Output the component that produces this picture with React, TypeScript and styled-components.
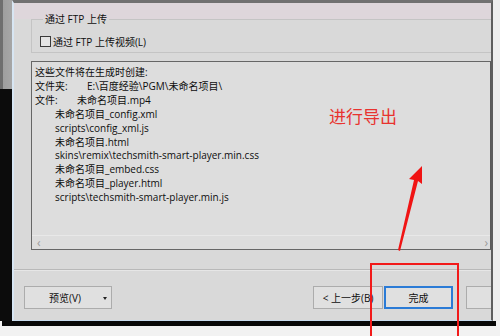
import styled, { createGlobalStyle } from 'styled-components';

const GlobalStyle = createGlobalStyle`
  html, body {
    margin: 0;
    padding: 0;
    background: #ececec;
  }
  body {
    font-family: "Open Sans", "Noto Sans CJK SC", sans-serif;
    font-size: 10px;
    color: #0e0e0e;
  }
`;

const files = [
	'未命名项目_config.xml',
	'scripts\\config_xml.js',
	'未命名项目.html',
	'skins\\remix\\techsmith-smart-player.min.css',
	'未命名项目_embed.css',
	'未命名项目_player.html',
	'scripts\\techsmith-smart-player.min.js',
];

export default function App() {
	return (
		<>
			<GlobalStyle />
			<Screen>
				<Main>
					<LeftStrip />
					<Window>
						<GroupBox>
							<Legend>通过 FTP 上传</Legend>
							<CheckRow>
								<Check />
								<span>通过 FTP 上传视频(L)</span>
							</CheckRow>
						</GroupBox>

						<FileList>
							<Lines>
								<Line>这些文件将在生成时创建:</Line>
								<Line>
									<Label $w={52}>文件夹:</Label>E:\百度经验\PGM\未命名项目\
								</Line>
								<Line>
									<Label $w={42}>文件:</Label>未命名项目.mp4
								</Line>
								{files.map((f) => (
									<Line key={f} $indent>
										{f}
									</Line>
								))}
							</Lines>
							<ScrollBar>
								<span>‹</span>
								<span>›</span>
							</ScrollBar>
						</FileList>

						<Separator />

						<ButtonRow>
							<Button $w={88}>
								预览(V)
								<Caret />
							</Button>
							<Spacer />
							<Button $w={70}>&lt; 上一步(B)</Button>
							<Button $w={69} $primary>
								完成
							</Button>
							<Button $w={70} />
						</ButtonRow>
					</Window>
					<RightMargin />
				</Main>
				<BottomBar />

				<Note>进行导出</Note>
				<Arrow viewBox="0 0 40 90" width="40" height="90">
					<path d="M6 84 L22 14 L17 13 L30 0 L30 18 L26 15 L8 85 Z" fill="#f01414" />
				</Arrow>
				<Highlight />
			</Screen>
		</>
	);
}

const Screen = styled.div`
  position: relative;
  width: 500px;
  height: 336px;
  overflow: hidden;
  background: linear-gradient(#d4d4d4, #f2f2f2 6px);
  display: flex;
  flex-direction: column;
`;

const Main = styled.div`
  display: flex;
  height: 321px;
  background: #ececec;
`;

const LeftStrip = styled.div`
  width: 12px;
  background: linear-gradient(
      90deg,
      #6e6e6e 0,
      #6e6e6e 3px,
      #9e9e9e 3px,
      #a6a6a6 12px
    )
    top / 100% 89px no-repeat,
    #0c0c0c;
`;

const Window = styled.div`
  width: 477px;
  overflow: hidden;
  border-left: 2px solid #d8e6f3;
  border-right: 2px solid #5e5e5e;
  border-top: 3px solid #717171;
  border-bottom: 1px solid #c9dcee;
  background: linear-gradient(#ded6db 0, #ded6db 16px, #d9d9d9 16px);
  display: flex;
  flex-direction: column;
`;

const RightMargin = styled.div`
  flex: 1;
  background: #eeeeee;
`;

const BottomBar = styled.div`
  width: 494px;
  height: 5px;
  margin-left: 2px;
  background: #080808;
`;

const GroupBox = styled.fieldset`
  margin: 10px 0 0 17px;
  padding: 10px 0 0 8px;
  height: 40px;
  box-sizing: border-box;
  border: 1px solid #c4c4c4;
  border-right: none;
  min-width: 0;
  flex: none;
`;

const Legend = styled.legend`
  font-family: "Open Sans", "Noto Sans CJK SC", sans-serif;
  padding: 0 2px;
  margin-left: 3px;
  line-height: 12px;
`;

const CheckRow = styled.label`
  display: flex;
  align-items: center;
  gap: 2px;
  height: 12px;
`;

const Check = styled.span`
  width: 9px;
  height: 9px;
  border: 1px solid #3a3a3a;
  background: #e4e4e4;
`;

const FileList = styled.div`
  margin: 8px 0 0 17px;
  height: 187px;
  flex: none;
  border: 1px solid #666;
  border-right: 1px solid #5a5a5a;
  background: #dddddd;
  display: flex;
  flex-direction: column;
`;

const Lines = styled.div`
  flex: 1;
  padding: 4px 0 0 3px;
  white-space: nowrap;
  overflow: hidden;
`;

const Line = styled.div<{ $indent?: boolean }>`
  line-height: 13.9px;
  padding-left: ${({ $indent }) => ($indent ? '20px' : '0')};
`;

const Label = styled.span<{ $w: number }>`
  display: inline-block;
  width: ${({ $w }) => $w}px;
`;

const ScrollBar = styled.div`
  height: 13px;
  border-top: 1px solid #e8e8e8;
  display: flex;
  justify-content: space-between;
  align-items: center;
  padding: 0 2px 0 5px;
  color: #9a9a9a;
  font-size: 12px;
`;

const Separator = styled.div`
  margin-top: 19px;
  height: 1px;
  flex: none;
  background: #b9b9b9;
  border-bottom: 1px solid #e6e6e6;
`;

const ButtonRow = styled.div`
  display: flex;
  align-items: center;
  gap: 1px;
  margin: 15px -45px 0 10px;
`;

const Spacer = styled.div`
  flex: 1;
`;

const Button = styled.div<{ $w: number; $primary?: boolean }>`
  position: relative;
  flex: none;
  width: ${({ $w }) => $w}px;
  height: 23px;
  box-sizing: border-box;
  display: flex;
  align-items: center;
  justify-content: center;
  background: #e0e0e0;
  border: ${({ $primary }) => ($primary ? '2px solid #2b7bd6' : '1px solid #acacac')};
  white-space: nowrap;
  overflow: hidden;
  margin-right: ${({ $primary }) => ($primary ? '12px' : '0')};
  &:first-child {
    justify-content: flex-start;
    padding-left: 24px;
  }
`;

const Caret = styled.span`
  position: absolute;
  right: 4px;
  top: 10px;
  border-left: 2.5px solid transparent;
  border-right: 2.5px solid transparent;
  border-top: 3px solid #222;
`;

const Note = styled.div`
  position: absolute;
  left: 329px;
  top: 106px;
  font-family: "Noto Sans CJK SC", sans-serif;
  font-size: 17px;
  line-height: 20px;
  color: #e8332f;
`;

const Arrow = styled.svg`
  position: absolute;
  left: 392px;
  top: 166px;
`;

const Highlight = styled.div`
  position: absolute;
  left: 370px;
  top: 263px;
  width: 85px;
  height: 80px;
  border: 2px solid #f21a1a;
  border-bottom: none;
`;
